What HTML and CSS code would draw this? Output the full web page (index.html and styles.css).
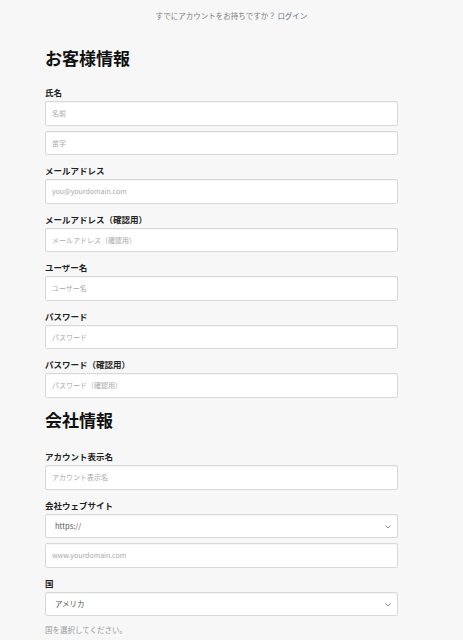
FILE: index.html
```html
<!DOCTYPE html>
<html lang="ja">
<head>
<meta charset="utf-8">
<title>登録</title>
<link rel="stylesheet" href="styles.css">
</head>
<body>
<div class="page">
  <p class="signin">すでにアカウントをお持ちですか？ <a href="#" class="signin-link">ログイン</a></p>

  <h2 class="section-title first">お客様情報</h2>

  <div class="field">
    <label class="label">氏名</label>
    <div class="stack">
      <input class="input" type="text" placeholder="名前">
      <input class="input" type="text" placeholder="苗字">
    </div>
  </div>

  <div class="field">
    <label class="label">メールアドレス</label>
    <input class="input" type="email" placeholder="you@yourdomain.com">
  </div>

  <div class="field">
    <label class="label">メールアドレス（確認用）</label>
    <input class="input" type="email" placeholder="メールアドレス（確認用）">
  </div>

  <div class="field">
    <label class="label">ユーザー名</label>
    <input class="input" type="text" placeholder="ユーザー名">
  </div>

  <div class="field">
    <label class="label">パスワード</label>
    <input class="input" type="password" placeholder="パスワード">
  </div>

  <div class="field">
    <label class="label">パスワード（確認用）</label>
    <input class="input" type="password" placeholder="パスワード（確認用）">
  </div>

  <h2 class="section-title">会社情報</h2>

  <div class="field">
    <label class="label">アカウント表示名</label>
    <input class="input" type="text" placeholder="アカウント表示名">
  </div>

  <div class="field">
    <label class="label">会社ウェブサイト</label>
    <div class="stack">
      <div class="select-wrap">
        <select class="select"><option>https://</option><option>http://</option></select>
        <svg class="chevron" width="6" height="4" viewBox="0 0 6 4"><path d="M0.5 0.5 L3 3 L5.5 0.5" fill="none" stroke="#8a8a8a" stroke-width="1"/></svg>
      </div>
      <input class="input" type="text" placeholder="www.yourdomain.com">
    </div>
  </div>

  <div class="field">
    <label class="label">国</label>
    <div class="select-wrap">
      <select class="select"><option>アメリカ</option><option>日本</option></select>
      <svg class="chevron" width="6" height="4" viewBox="0 0 6 4"><path d="M0.5 0.5 L3 3 L5.5 0.5" fill="none" stroke="#8a8a8a" stroke-width="1"/></svg>
    </div>
    <p class="help">国を選択してください。</p>
  </div>
</div>
</body>
</html>
```

FILE: styles.css
```css
* { box-sizing: border-box; }

html, body {
  margin: 0;
  padding: 0;
  background: #f7f7f7;
}

body {
  font-family: "Noto Sans CJK JP", "Noto Sans", "Liberation Sans", sans-serif;
  color: #222;
}

.page {
  width: 353px;
  margin-left: 45px;
  padding-bottom: 20px;
}

.signin {
  margin: 0;
  padding-top: 10px;
  font-size: 7.5px;
  line-height: 12px;
  color: #7a7a7a;
  text-align: center;
  width: 373px;
}

.signin-link {
  color: #5f6f88;
  text-decoration: none;
}

.section-title {
  margin: 10px 0 19.5px;
  font-size: 17px;
  line-height: 24px;
  font-weight: 700;
  color: #111;
}

.section-title.first {
  margin-top: 24px;
  margin-bottom: 17px;
}

.field {
  margin-bottom: 10px;
}

.label {
  display: block;
  font-size: 8.5px;
  line-height: 11px;
  font-weight: 700;
  color: #222;
  margin-bottom: 3px;
}

.stack {
  display: flex;
  flex-direction: column;
  gap: 5px;
}

.input,
.select {
  display: block;
  width: 100%;
  height: 24.5px;
  margin: 0;
  background: #fff;
  border: 1px solid #d8d8d8;
  border-radius: 2px;
  box-shadow: inset 0 1px 1px rgba(0, 0, 0, 0.04);
  font-family: "Noto Sans CJK JP", "Liberation Sans", sans-serif;
  outline: none;
}

.input {
  padding: 0 6px;
  font-size: 7px;
  color: #333;
}

.input::placeholder {
  color: #a8a8a8;
}

.select-wrap {
  position: relative;
}

.select {
  appearance: none;
  -webkit-appearance: none;
  padding: 0 9px;
  font-size: 7.5px;
  color: #555;
}

.chevron {
  position: absolute;
  right: 7px;
  top: 11px;
}

.help {
  margin: 8px 0 0;
  font-size: 7.5px;
  line-height: 11px;
  color: #9a9a9a;
}
```
